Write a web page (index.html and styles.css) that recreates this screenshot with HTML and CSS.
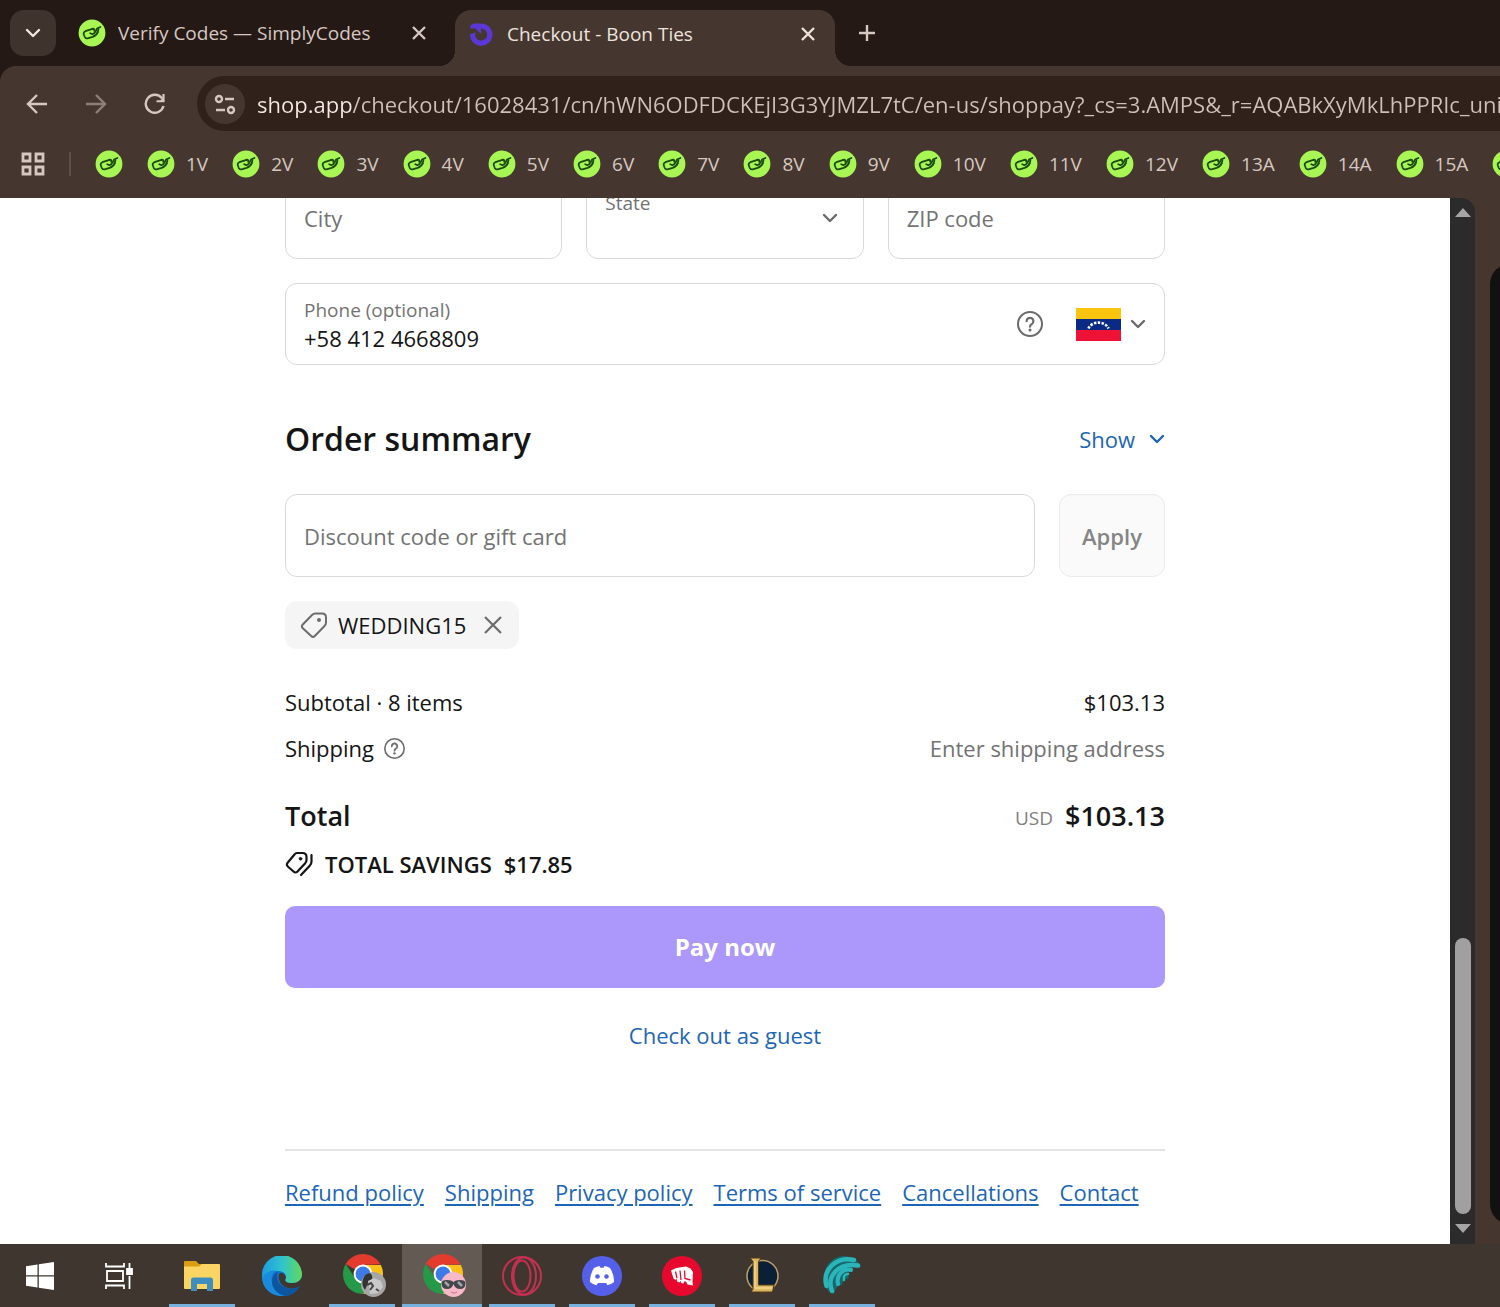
FILE: index.html
```html
<!DOCTYPE html>
<html lang="en">
<head>
<meta charset="utf-8">
<title>Checkout - Boon Ties</title>
<link rel="stylesheet" href="styles.css">
</head>
<body>
<svg class="sprite" aria-hidden="true">
  <symbol id="simply" viewBox="0 0 28 28">
    <circle cx="14" cy="14" r="13.4" fill="#a8f653"/>
    <g fill="none" stroke="#1b4a0d" stroke-width="1.8" stroke-linecap="round" stroke-linejoin="round">
      <path d="M14.5 9.800 7.400 12.200Q5.200 13.200 5.800 15.200L6.800 18Q7.500 19.800 9.600 19.300L14.600 17.900Q18.400 16.600 19.600 13.400"/>
      <path d="M12.200 14.200 14.400 15.200Q16.600 14.600 17.600 12.400L19 9.600 22.400 8"/>
      <path d="M14.500 9.800Q16.800 9.400 16.200 11.800M19.600 13.400 20.400 10.600"/>
    </g>
  </symbol>
  <symbol id="chevron" viewBox="0 0 16 10"><path d="M2 2l6 6 6-6" fill="none" stroke="currentColor" stroke-width="2.4" stroke-linecap="round" stroke-linejoin="round"/></symbol>
  <symbol id="cross" viewBox="0 0 16 16"><path d="M2 2l12 12M14 2 2 14" fill="none" stroke="currentColor" stroke-width="2.4"/></symbol>
  <symbol id="help" viewBox="0 0 26 26">
    <circle cx="13" cy="13" r="12" fill="none" stroke="currentColor" stroke-width="2"/>
    <path d="M9.600 10.200a3.400 3.400 0 1 1 5.200 2.900c-1.300.8-1.800 1.300-1.800 2.600" fill="none" stroke="currentColor" stroke-width="2.200" stroke-linecap="round"/>
    <circle cx="13" cy="19" r="1.500" fill="currentColor"/>
  </symbol>
  <symbol id="chrome" viewBox="0 0 40 40">
    <path d="M20 20 2.700 10A20 20 0 0 1 37.300 10L37.300 10.200 20 11z" fill="#e33b2e"/>
    <path d="M37.300 10A20 20 0 0 1 20 40l8.500-16L20 11H37.900z" fill="#fbc116"/>
    <path d="M2.700 10A20 20 0 0 0 20 40l8-15-8 4-8-5z" fill="#249a48"/>
    <circle cx="20" cy="20" r="9.400" fill="#fff"/><circle cx="20" cy="20" r="7.400" fill="#3a7be8"/>
  </symbol>
</svg>

<header class="browser">
  <div class="tabstrip">
    <button class="tab-search" aria-label="Search tabs"><svg class="i-chev"><use href="#chevron"/></svg></button>
    <div class="tab">
      <svg class="i-28"><use href="#simply"/></svg>
      <span class="tab-title">Verify Codes — SimplyCodes</span>
      <button class="icon-btn" aria-label="Close tab"><svg class="i-16"><use href="#cross"/></svg></button>
    </div>
    <div class="tab tab-active">
      <svg class="i-28" viewBox="0 0 28 28"><path d="M3.500 5.500 6.500 3.400H14.500A11.200 11.200 0 1 1 3 14.200L8.500 12.600A6 6 0 1 0 14.500 8.600Q13 8.600 14.200 10.600V13.400Q10 11.500 8.600 8.600H3.500z" fill="#5b38d6"/></svg>
      <span class="tab-title">Checkout - Boon Ties</span>
      <button class="icon-btn" aria-label="Close tab"><svg class="i-16"><use href="#cross"/></svg></button>
    </div>
    <button class="icon-btn new-tab" aria-label="New tab"><svg class="i-18" viewBox="0 0 18 18"><path d="M9 1v16M1 9h16" stroke="currentColor" stroke-width="2.400"/></svg></button>
  </div>
  <div class="chrome-bars">
    <div class="toolbar">
      <button class="icon-btn" aria-label="Back"><svg class="i-22" viewBox="0 0 22 22"><path d="M21 11H2M11 2l-9 9 9 9" fill="none" stroke="currentColor" stroke-width="2.400"/></svg></button>
      <button class="icon-btn dim" aria-label="Forward"><svg class="i-22" viewBox="0 0 22 22"><path d="M1 11h19M11 2l9 9-9 9" fill="none" stroke="currentColor" stroke-width="2.400"/></svg></button>
      <button class="icon-btn" aria-label="Reload"><svg class="i-22" viewBox="0 0 22 22"><path d="M19.500 13A9 9 0 1 1 18 5.400" fill="none" stroke="currentColor" stroke-width="2.400"/><path d="M20.600 1v8.200H12.500V7.200h4L18.400 5V1z" fill="currentColor"/></svg></button>
      <div class="omnibox">
        <button class="site-info" aria-label="Site information"><svg class="i-22" viewBox="0 0 22 22" fill="none" stroke="currentColor" stroke-width="2.400"><circle cx="5" cy="6" r="3"/><path d="M11 6h9M2 17h9"/><circle cx="17" cy="17" r="3"/></svg></button>
        <input class="url" aria-label="Address" value="shop.app/checkout/16028431/cn/hWN6ODFDCKEjI3G3YJMZL7tC/en-us/shoppay?_cs=3.AMPS&amp;_r=AQABkXyMkLhPPRIc_unique">
      </div>
    </div>
    <nav class="bookmarks" aria-label="Bookmarks">
      <button class="icon-btn apps" aria-label="Apps"><svg class="i-24" viewBox="0 0 24 24" fill="none" stroke="currentColor" stroke-width="2.800"><path d="M2 2h7v7H2zM15 2h7v7h-7zM2 15h7v7H2zM15 15h7v7h-7z"/></svg></button>
      <span class="divider"></span>
      <a href="#" aria-label="SimplyCodes"><svg class="i-28"><use href="#simply"/></svg></a>
      <a href="#"><svg class="i-28"><use href="#simply"/></svg>1V</a>
      <a href="#"><svg class="i-28"><use href="#simply"/></svg>2V</a>
      <a href="#"><svg class="i-28"><use href="#simply"/></svg>3V</a>
      <a href="#"><svg class="i-28"><use href="#simply"/></svg>4V</a>
      <a href="#"><svg class="i-28"><use href="#simply"/></svg>5V</a>
      <a href="#"><svg class="i-28"><use href="#simply"/></svg>6V</a>
      <a href="#"><svg class="i-28"><use href="#simply"/></svg>7V</a>
      <a href="#"><svg class="i-28"><use href="#simply"/></svg>8V</a>
      <a href="#"><svg class="i-28"><use href="#simply"/></svg>9V</a>
      <a href="#"><svg class="i-28"><use href="#simply"/></svg>10V</a>
      <a href="#"><svg class="i-28"><use href="#simply"/></svg>11V</a>
      <a href="#"><svg class="i-28"><use href="#simply"/></svg>12V</a>
      <a href="#"><svg class="i-28"><use href="#simply"/></svg>13A</a>
      <a href="#"><svg class="i-28"><use href="#simply"/></svg>14A</a>
      <a href="#"><svg class="i-28"><use href="#simply"/></svg>15A</a>
      <a href="#" aria-label="SimplyCodes"><svg class="i-28"><use href="#simply"/></svg></a>
    </nav>
  </div>
</header>

<div class="window">
  <main class="page">
    <div class="checkout">
      <form class="address">
        <div class="field"><input class="plain" aria-label="City" placeholder="City"></div>
        <div class="field">
          <label for="state">State</label>
          <select id="state"><option></option></select>
          <svg class="i-chev"><use href="#chevron"/></svg>
        </div>
        <div class="field"><input class="plain" aria-label="ZIP code" placeholder="ZIP code"></div>
        <div class="field phone">
          <div class="stack">
            <label for="phone">Phone (optional)</label>
            <input id="phone" type="tel" value="+58 412 4668809">
          </div>
          <svg class="i-26"><use href="#help"/></svg>
          <button type="button" class="country" aria-label="Country code: Venezuela">
            <svg class="flag" viewBox="0 0 45 33"><path fill="#f9c40d" d="M0 0h45v11H0z"/><path fill="#0b2a86" d="M0 11h45v11H0z"/><path fill="#ee1237" d="M0 22h45v11H0z"/><path d="M12.500 20.500A10.500 8.500 0 0 1 32.500 20.500" fill="none" stroke="#fff" stroke-width="2.600" stroke-dasharray="2.400 1.400"/></svg>
            <svg class="i-chev"><use href="#chevron"/></svg>
          </button>
        </div>
      </form>

      <section class="summary">
        <div class="summary-head">
          <h2>Order summary</h2>
          <button class="link show">Show <svg class="i-chev"><use href="#chevron"/></svg></button>
        </div>
        <form class="discount">
          <div class="field"><input class="plain" aria-label="Discount code or gift card" placeholder="Discount code or gift card"></div>
          <button type="button" class="apply">Apply</button>
        </form>
        <div class="chip">
          <svg class="i-28" viewBox="0 0 28 28"><path d="M15.500 2.500H22Q26 2.500 26 6.500V11.500Q26 13.500 24.500 15L14.800 25Q13 26.800 11.200 25L2.800 17.200Q1 15.400 2.800 13.500L12 4Q13.500 2.500 15.500 2.500z" fill="none" stroke="currentColor" stroke-width="2"/><circle cx="19" cy="9" r="2" fill="currentColor"/></svg>
          <span>WEDDING15</span>
          <button class="icon-btn" aria-label="Remove WEDDING15"><svg class="i-20" viewBox="0 0 20 20"><path d="M2 2l16 16M18 2 2 18" stroke="currentColor" stroke-width="2.200"/></svg></button>
        </div>
        <dl class="costs">
          <div><dt>Subtotal · 8 items</dt><dd>$103.13</dd></div>
          <div><dt>Shipping <svg class="i-21"><use href="#help"/></svg></dt><dd class="muted">Enter shipping address</dd></div>
          <div class="total"><dt>Total</dt><dd><span class="currency">USD</span><span>$103.13</span></dd></div>
        </dl>
        <p class="savings">
          <svg class="i-28" viewBox="0 0 28 28" fill="none" stroke="currentColor" stroke-width="2.200" stroke-linecap="round"><path d="M12 3H17.500Q21.500 3 21.500 7V10Q21.500 12 20 13.500L12.500 21.500Q10.500 23.500 8.500 21.500L2.800 16.500Q1 14.600 2.800 12.500L9.500 4.500Q10.500 3 12 3z"/><path d="M26.500 5V11.500Q26.500 14 24.700 15.800L16 25"/><circle cx="15.500" cy="8.800" r="1.300" fill="currentColor" stroke-width="1"/></svg>
          <span>TOTAL SAVINGS</span><span>$17.85</span>
        </p>
        <button class="pay">Pay now</button>
        <a class="link guest" href="#">Check out as guest</a>
      </section>

      <footer class="policies">
        <a href="#">Refund policy</a>
        <a href="#">Shipping</a>
        <a href="#">Privacy policy</a>
        <a href="#">Terms of service</a>
        <a href="#">Cancellations</a>
        <a href="#">Contact</a>
      </footer>
    </div>
  </main>
  <div class="scrollbar" aria-hidden="true">
    <svg class="arrow" viewBox="0 0 16 9"><path d="M8 0l8 9H0z" fill="#a5a5a5"/></svg>
    <div class="track"><div class="thumb"></div></div>
    <svg class="arrow" viewBox="0 0 16 9"><path d="M8 9L0 0h16z" fill="#a5a5a5"/></svg>
  </div>
  <aside class="edge"><div class="edge-panel"></div></aside>
</div>

<nav class="taskbar" aria-label="Taskbar">
  <button class="task system" aria-label="Start"><svg class="i-28" viewBox="0 0 28 28"><path fill="#fff" d="M0 4.200 11.500 2.400V13.300H0zM12.800 2.200 28 0V13.300H12.800zM0 14.600H11.500V25.500L0 23.800zM12.800 14.600H28V28L12.800 25.800z"/></svg></button>
  <button class="task system" aria-label="Task view"><svg class="i-28" viewBox="0 0 28 28" fill="none" stroke="#fff" stroke-width="1.800"><path d="M1 1V4.500H19V1M2 9H18V19H2zM1 27V23.500H19V27M24.500 1V6M24.500 14V27"/><path d="M22 7h5v5h-5z" fill="#fff"/></svg></button>
  <button class="task open first" aria-label="File Explorer"><svg class="i-40" viewBox="0 0 40 40"><path d="M2 6q0-1 1-1h11l3 3h20v5H2z" fill="#dc9c14"/><path d="M2 10.500h15l3-2.500h17q1 0 1 1v23q0 1-1 1H3q-1 0-1-1z" fill="#fbd564"/><path d="M9 35V24q0-2.500 2.500-2.500h17q2.500 0 2.500 2.500v11h-6v-7h-10v7z" fill="#3f8fbe"/></svg></button>
  <button class="task" aria-label="Edge"><svg class="i-40" viewBox="0 0 40 40">
    <defs><linearGradient id="edgeTop" x1="0" x2="1"><stop offset="0" stop-color="#1e9be0"/><stop offset=".5" stop-color="#2fc3cf"/><stop offset="1" stop-color="#62d957"/></linearGradient></defs>
    <circle cx="20" cy="20" r="20" fill="#1273cf"/>
    <path d="M0 21C2 14 9 11 16 14.500C11 15.500 8.500 20 10 26C11.500 33 17 38 24 39.500C11 42 0 33 0 21z" fill="#1a8bdc"/>
    <path d="M16 15.500C13 22 17 31 27 32.500C31 33 35 32 38.500 29C35 36.500 29 40 23 40C14 38 9.500 31 10 25C10.500 20 12.500 17 16 15.500z" fill="#0e559f"/>
    <path d="M41 18C40 24 35.500 27 30 27C25.500 27 22.500 25.500 23.500 23.500C25 20 22 16.500 18 17C14.500 21 18 32 29 32.500C34 32.500 37 30.500 41 28z" fill="#3d372f"/>
    <path d="M0 20A20 20 0 0 1 40 18C40 24 35.500 27 30 27C25.500 27 22.500 25.500 23.500 23.500C25.500 19 22 15 16 15C9 13 3 17 0 22z" fill="url(#edgeTop)"/>
  </svg></button>
  <button class="task open" aria-label="Chrome, profile 1"><svg class="i-44" viewBox="0 0 44 44"><use href="#chrome" width="40" height="40"/><circle cx="30.500" cy="30.500" r="12.500" fill="#a6a6a6"/><path d="M20 25q2-6 7-6 3 2 2 7l-4 3-3 7q-4-5-2-11z" fill="#333"/><path d="M25 27l6-3 7 3 2 6-5 6-8 1z" fill="#c9c9c9"/><path d="M24 31l4-2 2 3-3 4M33 35l3 2" stroke="#444" stroke-width="2" fill="none"/></svg></button>
  <button class="task open current" aria-label="Chrome, profile 2"><svg class="i-44" viewBox="0 0 44 44"><use href="#chrome" width="40" height="40"/><circle cx="30.500" cy="30.500" r="12.500" fill="#f7b9c8"/><path d="M18.500 29q0-3 5.500-3 6 0 6.500 2.500Q31 26 37 26q5.500 0 5.500 3 0 6-5.500 6-5 0-6.500-5-1.500 5-6.500 5-5.500 0-5.500-6z" fill="#45464b"/><path d="M22 28l4 4M35 28l4 4" stroke="#a1a5aa" stroke-width="2.500"/><path d="M28 38q3 2 6 0" fill="none" stroke="#d77f96" stroke-width="1.500"/></svg></button>
  <button class="task open" aria-label="Opera GX"><svg class="i-40" viewBox="0 0 40 40" fill="none" stroke="#c52f50" stroke-width="2"><circle cx="20" cy="20" r="19"/><ellipse cx="22" cy="20" rx="12" ry="18.500"/><ellipse cx="20" cy="20" rx="8.500" ry="15.500"/></svg></button>
  <button class="task open" aria-label="Discord"><svg class="i-40" viewBox="0 0 40 40"><circle cx="20" cy="20" r="20" fill="#5560ea"/><path d="M12 12q3-1.700 5.500-2l1 1.700h3L22.500 10q3 .3 5.500 2 4.500 7 4 14-3 2.500-6.500 3.200L24 27h-8l-1.500 2.200Q11 28.500 8 26q-.5-7 4-14z" fill="#fff"/><circle cx="15.500" cy="20.500" r="2.300" fill="#5560ea"/><circle cx="24.500" cy="20.500" r="2.300" fill="#5560ea"/></svg></button>
  <button class="task open" aria-label="Bloody"><svg class="i-40" viewBox="0 0 40 40"><circle cx="20" cy="20" r="20" fill="#e7092d"/><path d="M9 14.500 13 12.500 17 11.500 24 10.500 28.500 12.500 31 16 30.500 26 31 29.500 25.500 28.500 24 25.500H22L21.500 27.500 19 27 18.500 24.500 17.500 26.500 15 25.500 14.500 22 13.500 24 11.500 22.500z" fill="#fff"/><path d="M13.500 15.500 15 22M18 14.500 19 24M22.500 14.500 23 22.500 28.500 24" fill="none" stroke="#e7092d" stroke-width="1.300"/></svg></button>
  <button class="task open" aria-label="League of Legends"><svg class="i-40" viewBox="0 0 40 40"><circle cx="20.500" cy="20" r="15.500" fill="#0a2037" stroke="#b99b63" stroke-width="1.600"/><path d="M8 2h11l-2.500 3.500V29H32l-1.500 7H9l2-3V5.500z" fill="#deb563" stroke="#4d3817" stroke-width="1"/><path d="M13 5v27h17" fill="none" stroke="#f2d88f" stroke-width="1.500"/></svg></button>
  <button class="task open" aria-label="Wave app"><svg class="i-40" viewBox="0 0 40 40"><path d="M7 36C-4 21 4 1 22 0Q34 0 39 11Q34 9 30 11.500Q33 14 27 16Q25 19 27 22Q20 24 20 29Q14 29 12 38z" fill="#15696d"/><g fill="none" stroke="#2bb5b8" stroke-linecap="round"><path d="M4.500 30C0 14 14 0 32 4" stroke-width="4.500"/><path d="M10 35C4 20 17 6 36 9.500" stroke-width="4.500"/><path d="M16 28C14 19 21 12 29 14" stroke-width="4"/><path d="M22 24C21 20 23 18 26 18" stroke-width="2.500"/></g></svg></button>
</nav>
</body>
</html>
```
FILE: styles.css
```css
* { box-sizing: border-box; }

body {
  margin: 0;
  min-height: 100vh;
  display: flex;
  flex-direction: column;
  overflow-x: hidden;
  background: #453730;
  color: #151515;
  font-family: "Open Sans", "Noto Sans", sans-serif;
  font-size: 22px;
  line-height: 32px;
}

button, input, select { font: inherit; color: inherit; }
button { border: 0; padding: 0; background: none; }
svg { display: block; flex: none; }
h2, p, dl, dd { margin: 0; }

.sprite { position: absolute; width: 0; height: 0; }
.i-chev { width: 16px; height: 10px; }
.i-16 { width: 16px; height: 16px; }
.i-18 { width: 18px; height: 18px; }
.i-20 { width: 20px; height: 20px; }
.i-21 { width: 21px; height: 21px; }
.i-22 { width: 22px; height: 22px; }
.i-24 { width: 24px; height: 24px; }
.i-26 { width: 26px; height: 26px; }
.i-28 { width: 28px; height: 28px; }
.i-40 { width: 40px; height: 40px; }
.i-44 { width: 44px; height: 44px; margin-left: 5px; }

.icon-btn { display: flex; color: inherit; }
.dim { opacity: 0.5; }

/* Browser chrome */
.browser { background: #241915; color: #d6c8c0; font-size: 19px; }

.tabstrip {
  display: flex;
  align-items: center;
  height: 66px;
  padding-left: 10px;
}

.tab-search {
  display: flex;
  align-items: center;
  justify-content: center;
  width: 46px;
  height: 46px;
  border-radius: 14px;
  background: #3f332d;
  color: #f0e6e0;
}

.tab {
  display: flex;
  align-items: center;
  gap: 12px;
  width: 399px;
  padding: 0 28px 0 22px;
}

.tab-title { flex: 1; white-space: nowrap; overflow: hidden; }

.tab-active {
  position: relative;
  align-self: flex-end;
  width: 380px;
  height: 56px;
  padding: 0 19px 8px 12px;
  border-radius: 16px 16px 0 0;
  background: #453730;
  color: #eee3dd;
}

.tab-active::before,
.tab-active::after {
  content: "";
  position: absolute;
  bottom: 0;
  width: 16px;
  height: 16px;
}
.tab-active::before { right: 100%; background: radial-gradient(circle at 0 0, #241915 16px, #453730 16px); }
.tab-active::after { left: 100%; background: radial-gradient(circle at 100% 0, #241915 16px, #453730 16px); }

.new-tab { margin-left: 23px; }

.chrome-bars { border-radius: 16px 0 0 0; background: #453730; overflow: hidden; }

.toolbar {
  display: flex;
  align-items: center;
  gap: 37px;
  padding: 10px 0 0 26px;
}

.omnibox {
  flex: 1;
  display: flex;
  align-items: center;
  gap: 12px;
  height: 55px;
  margin-left: -6px;
  padding-left: 8px;
  border-radius: 28px 0 0 28px;
  background: #30211b;
}

.site-info {
  display: flex;
  align-items: center;
  justify-content: center;
  width: 40px;
  height: 40px;
  border-radius: 50%;
  background: #453730;
}

.url {
  flex: 1;
  min-width: 0;
  border: 0;
  padding: 0;
  outline: 0;
  font-size: 22px;
  color: #cfc0b8;
  background: linear-gradient(to right, #f5ebe5 95px, #cfc0b8 95px);
  -webkit-background-clip: text;
  background-clip: text;
  -webkit-text-fill-color: transparent;
}

.bookmarks {
  display: flex;
  align-items: center;
  gap: 24px;
  height: 67px;
  padding: 0 0 2px 21px;
  overflow: hidden;
}

.bookmarks a {
  display: flex;
  flex: none;
  align-items: center;
  gap: 11px;
  color: inherit;
  text-decoration: none;
}

.divider { flex: none; width: 2px; height: 24px; background: #5f4f47; }

/* Page and window edges */
.window { flex: 1; display: flex; }

.page { flex: 1; min-width: 0; overflow: hidden; background: #fff; }

.checkout { max-width: 880px; margin: -22px auto 0; }

.address {
  display: grid;
  grid-template-columns: repeat(3, 1fr);
  gap: 24px;
}

.field {
  position: relative;
  display: flex;
  align-items: center;
  height: 83px;
  padding: 0 18px;
  border: 1px solid #d9d9d9;
  border-radius: 12px;
  background: #fff;
}

.field input,
.field select {
  width: 100%;
  border: 0;
  padding: 0;
  outline: 0;
  background: none;
}

.field .plain { height: 80px; }
.field input::placeholder { color: #737373; opacity: 1; }
.field label { color: #737373; font-size: 19px; line-height: 28px; }
.field > label { align-self: flex-start; padding-top: 12px; }
.field select { appearance: none; height: 80px; }
.field svg { color: #6a6a6a; }
.field > .i-chev { margin-right: 7px; }

.phone { grid-column: 1 / -1; height: 82px; }
.stack { flex: 1; display: flex; flex-direction: column; }
.stack input { height: 28px; }
.country { display: flex; align-items: center; gap: 9px; margin-left: 33px; }
.flag { width: 45px; height: 33px; }

.summary { display: flex; flex-direction: column; }

.summary-head {
  display: flex;
  align-items: center;
  justify-content: space-between;
  margin: 50px 0 31px;
}

.summary-head h2 { font-size: 32px; line-height: 48px; font-weight: 600; }
.link { color: #1c66b5; text-decoration: none; }
.show { display: flex; align-items: center; gap: 14px; }

.discount { display: flex; gap: 24px; }
.discount .field { flex: 1; }

.apply {
  width: 106px;
  border: 1px solid #ececec;
  border-radius: 12px;
  background: #fafafa;
  color: #858585;
  font-weight: 600;
}

.chip {
  align-self: flex-start;
  display: flex;
  align-items: center;
  gap: 10px;
  height: 48px;
  margin: 24px 0 37px;
  padding: 0 16px 0 15px;
  border-radius: 12px;
  background: #f5f5f5;
}
.chip svg { color: #6c6c6c; }
.chip .icon-btn { margin-left: 7px; }

.costs { display: flex; flex-direction: column; gap: 14px; }
.costs > div { display: flex; justify-content: space-between; align-items: center; }
.costs dt { display: flex; align-items: center; gap: 10px; }
.costs dt svg { color: #6c6c6c; }
.muted { color: #737373; }

.costs .total {
  margin-top: 18px;
  font-size: 27px;
  line-height: 40px;
  font-weight: 600;
}
.total dd { display: flex; align-items: center; gap: 12px; }
.currency { padding-top: 4px; line-height: 36px; color: #808080; font-size: 19px; font-weight: 400; }

.savings { display: flex; align-items: center; gap: 12px; margin: 12px 0 26px; font-weight: 600; }

.pay {
  height: 82px;
  border-radius: 10px;
  background: #ab98fa;
  color: #fff;
  font-size: 24px;
  font-weight: 700;
}

.guest { align-self: center; margin: 31px 0 98px; }

.policies {
  display: flex;
  gap: 21px;
  padding: 25px 0 35px;
  border-top: 2px solid #e3e3e3;
}
.policies a { color: #1c66b5; text-underline-offset: 3px; }

.scrollbar {
  display: flex;
  flex-direction: column;
  align-items: center;
  gap: 10px;
  width: 25px;
  padding: 10px 0 11px;
  border-radius: 0 14px 0 0;
  background: #2b2b2b;
}
.arrow { width: 16px; height: 9px; }
.track { flex: 1; display: flex; flex-direction: column; justify-content: flex-end; width: 16px; }
.thumb { height: 28%; border-radius: 8px; background: #a0a0a0; }

.edge { display: flex; width: 25px; padding: 66px 0 20px 15px; overflow: hidden; }
.edge-panel { flex: none; width: 40px; border-radius: 20px; background: #111; }

/* Taskbar */
.taskbar { display: flex; height: 63px; background: #3f372f; }

.task {
  display: flex;
  align-items: center;
  justify-content: center;
  width: 80px;
  background: bottom / 66px 3px no-repeat;
}
.task.system { width: 79px; }
.task.first { margin-left: 4px; }
.open { background-image: linear-gradient(#76b0dc, #76b0dc); }
.current { background-color: #625a53; background-size: 100% 3px; }
```
